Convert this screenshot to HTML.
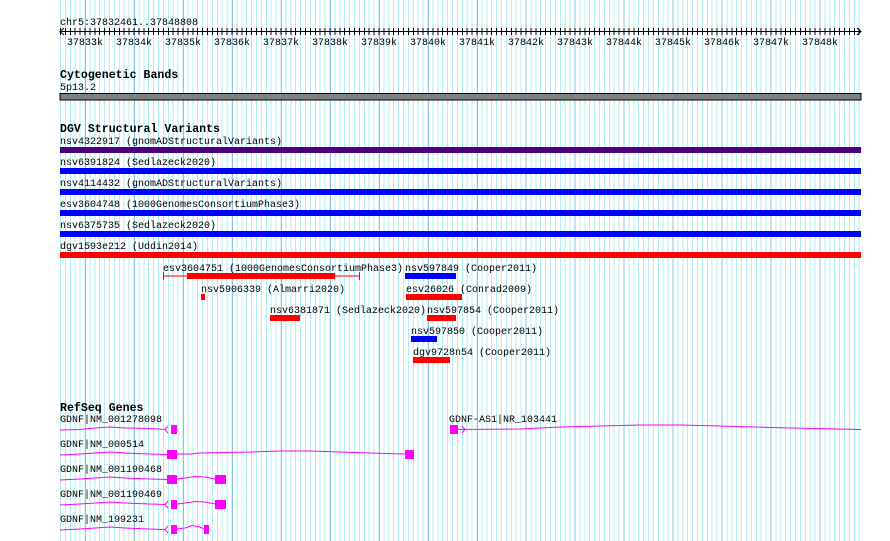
<!DOCTYPE html>
<html><head><meta charset="utf-8"><style>
html,body{margin:0;padding:0;background:#fff;width:890px;height:541px;overflow:hidden;position:relative}
.minor{position:absolute;left:60px;top:0;width:802px;height:541px;background:repeating-linear-gradient(to right,#aeeef2 0 1px,transparent 1px 4.9px)}
.major{position:absolute;left:85px;top:0;width:777px;height:541px;background:repeating-linear-gradient(to right,#8cc2ea 0 1px,transparent 1px 48.97px)}
.ticks{position:absolute;left:60px;top:28px;width:801px;height:7px;background:repeating-linear-gradient(to right,#000 0 1px,transparent 1px 4.9px)}
svg{position:absolute;left:0;top:0}
text{font-family:"Liberation Mono",monospace;font-size:10px;fill:#000}
.h{font-weight:bold;font-size:11.6px}
</style></head><body>
<div class="minor"></div><div class="major"></div><div class="ticks"></div>
<svg width="890" height="541" xmlns="http://www.w3.org/2000/svg">
<text x="60" y="25">chr5:37832461..37848808</text>
<line x1="60" y1="31.5" x2="861" y2="31.5" stroke="#000"/>
<polyline points="64,28 60,31.5 64,35" fill="none" stroke="#000"/>
<polyline points="857,28 861,31.5 857,35" fill="none" stroke="#000"/>
<g text-anchor="middle">
<text x="85" y="45">37833k</text><text x="134" y="45">37834k</text><text x="183" y="45">37835k</text><text x="232" y="45">37836k</text><text x="281" y="45">37837k</text><text x="330" y="45">37838k</text><text x="379" y="45">37839k</text><text x="428" y="45">37840k</text><text x="477" y="45">37841k</text><text x="526" y="45">37842k</text><text x="575" y="45">37843k</text><text x="624" y="45">37844k</text><text x="673" y="45">37845k</text><text x="722" y="45">37846k</text><text x="771" y="45">37847k</text><text x="820" y="45">37848k</text>
</g>
<text class="h" x="60" y="78">Cytogenetic Bands</text>
<text x="60" y="90">5p13.2</text>
<rect x="60" y="93.5" width="801" height="6.5" fill="#808080" stroke="#000" stroke-width="1"/>
<text class="h" x="60" y="132">DGV Structural Variants</text>
<text x="60" y="144">nsv4322917 (gnomADStructuralVariants)</text>
<rect x="60" y="147" width="801" height="6" fill="#4b0082"/>
<text x="60" y="165">nsv6391824 (Sedlazeck2020)</text>
<rect x="60" y="168" width="801" height="6" fill="#0000ff"/>
<text x="60" y="186">nsv4114432 (gnomADStructuralVariants)</text>
<rect x="60" y="189" width="801" height="6" fill="#0000ff"/>
<text x="60" y="207">esv3604748 (1000GenomesConsortiumPhase3)</text>
<rect x="60" y="210" width="801" height="6" fill="#0000ff"/>
<text x="60" y="228">nsv6375735 (Sedlazeck2020)</text>
<rect x="60" y="231" width="801" height="6" fill="#0000ff"/>
<text x="60" y="249">dgv1593e212 (Uddin2014)</text>
<rect x="60" y="252" width="801" height="6" fill="#ff0000"/>

<text x="163" y="271">esv3604751 (1000GenomesConsortiumPhase3)</text>
<line x1="163" y1="276" x2="360" y2="276" stroke="#f00"/>
<line x1="163.5" y1="272" x2="163.5" y2="280" stroke="#f00"/>
<line x1="359.5" y1="272" x2="359.5" y2="280" stroke="#f00"/>
<rect x="187" y="273" width="148" height="6" fill="#f00"/>
<text x="405" y="271">nsv597849 (Cooper2011)</text>
<rect x="405" y="273" width="51" height="6" fill="#00f"/>
<text x="201" y="292">nsv5906339 (Almarri2020)</text>
<rect x="201" y="294" width="4" height="6" fill="#f00"/>
<text x="406" y="292">esv26026 (Conrad2009)</text>
<rect x="406" y="294" width="56" height="6" fill="#f00"/>
<text x="270" y="313">nsv6381871 (Sedlazeck2020)</text>
<rect x="270" y="315" width="30" height="6" fill="#f00"/>
<text x="427" y="313">nsv597854 (Cooper2011)</text>
<rect x="427" y="315" width="29" height="6" fill="#f00"/>
<text x="411" y="334">nsv597850 (Cooper2011)</text>
<rect x="411" y="336" width="26" height="6" fill="#00f"/>
<text x="413" y="355">dgv9728n54 (Cooper2011)</text>
<rect x="413" y="357" width="37" height="6" fill="#f00"/>

<text class="h" x="60" y="411">RefSeq Genes</text>
<g fill="none" stroke="#f0f" stroke-width="1">
<polyline points="60,430 80,429.5 95,428 110,427 125,428 150,428.5 165,429.5"/>
<polyline points="168,426 165,429.5 168,433"/>
<polyline points="457,429.5 520,429 560,427 600,426 640,425 680,425 720,426 770,427.5 861,429.5"/>
<polyline points="462,426 465,429.5 462,433"/>
<polyline points="60,455 80,454 95,453 110,452 125,453 150,454 167,454.5"/>
<polyline points="177,454 190,454 200,453 250,452 280,451 310,451 340,452 370,453 405,454"/>
<polyline points="60,480 80,479 95,478 110,477 125,478 150,479 167,479.5"/>
<polyline points="177,479 185,478 195,476.5 205,477 215,479"/>
<polyline points="60,505 80,504 95,503 110,502 125,503 150,504 165,504.5"/>
<polyline points="168,501 165,504.5 168,508"/>
<polyline points="177,504 185,503 195,501.5 205,502 215,504"/>
<polyline points="60,530 80,529 95,528 110,527 125,528 150,529 165,529.5"/>
<polyline points="168,526 165,529.5 168,533"/>
<polyline points="177,529 185,528 192,525.5 200,527 204,529"/>
</g>
<g fill="#f0f">
<rect x="171" y="425" width="6" height="9"/>
<rect x="450" y="425" width="8" height="9"/>
<rect x="167" y="450" width="10" height="9"/>
<rect x="405" y="450" width="9" height="9"/>
<rect x="167" y="475" width="10" height="9"/>
<rect x="215" y="475" width="11" height="9"/>
<rect x="171" y="500" width="6" height="9"/>
<rect x="215" y="500" width="11" height="9"/>
<rect x="171" y="525" width="6" height="9"/>
<rect x="204" y="525" width="5" height="9"/>
</g>
<text x="60" y="422">GDNF|NM_001278098</text>
<text x="449" y="422">GDNF-AS1|NR_103441</text>
<text x="60" y="447">GDNF|NM_000514</text>
<text x="60" y="472">GDNF|NM_001190468</text>
<text x="60" y="497">GDNF|NM_001190469</text>
<text x="60" y="522">GDNF|NM_199231</text>
</svg>
</body></html>
